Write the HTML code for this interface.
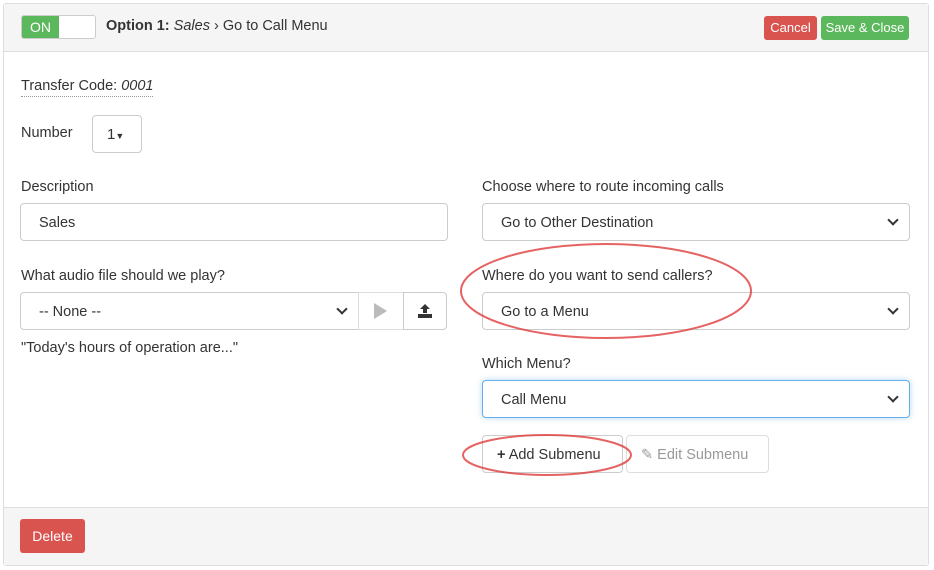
<!DOCTYPE html>
<html><head><style>
body{margin:0;width:934px;height:570px;background:#fff;font-family:"Liberation Sans",sans-serif;color:#333;position:relative;overflow:hidden}
.a{position:absolute}
.panel{left:3px;top:3px;width:924px;height:561px;border:1px solid #ddd;border-radius:3px}
.hd{left:4px;top:4px;width:924px;height:47px;background:#f5f5f5;border-bottom:1px solid #ddd}
.ft{left:4px;top:507px;width:924px;height:57px;background:#f5f5f5;border-top:1px solid #ddd}
.lbl{font-size:14.5px;color:#333}
.inp{border:1px solid #ccc;border-radius:4px;box-sizing:border-box;font-size:14.5px;padding-left:18px;padding-top:3px;background:#fff}
.chev{position:absolute;right:12px;top:12px;width:6px;height:6px;border-right:2px solid #333;border-bottom:2px solid #333;transform:rotate(45deg)}
.btn{border-radius:3px;color:#fff;font-size:13px;text-align:center;box-sizing:border-box}
</style></head><body>
<div class="a panel"></div>
<div class="a hd"></div>
<div class="a ft"></div>
<div class="a" style="left:21px;top:15px;width:75px;height:24px;border:1px solid #ccc;border-radius:3px;background:#fff;box-sizing:border-box"></div>
<div class="a" style="left:22px;top:16px;width:37px;height:22px;background:#5cb85c;color:#fff;font-size:14px;line-height:22px;text-align:center;border-radius:2px 0 0 2px">ON</div>
<div class="a" style="left:106px;top:18px;font-size:14.5px"><b>Option 1:</b> <i>Sales</i> › Go to Call Menu</div>
<div class="a btn" style="left:764px;top:16px;width:53px;height:24px;background:#d9534f;line-height:24px">Cancel</div>
<div class="a btn" style="left:821px;top:16px;width:88px;height:24px;background:#5cb85c;line-height:24px">Save &amp; Close</div>
<div class="a lbl" style="left:21px;top:78px;border-bottom:1px dotted #999;padding-bottom:2px">Transfer Code: <i>0001</i></div>
<div class="a lbl" style="left:21px;top:125px">Number</div>
<div class="a" style="left:92px;top:115px;width:50px;height:38px;border:1px solid #ccc;border-radius:4px;box-sizing:border-box;font-size:15px;line-height:38px;padding-left:14px">1<span style="font-size:9px">▼</span></div>
<div class="a lbl" style="left:21px;top:179px">Description</div>
<div class="a inp" style="left:20px;top:203px;width:428px;height:38px;line-height:32px">Sales</div>
<div class="a lbl" style="left:21px;top:268px">What audio file should we play?</div>
<div class="a inp" style="left:20px;top:292px;width:339px;height:38px;line-height:32px;border-radius:4px 0 0 4px">-- None --<span class="chev"></span></div>
<div class="a" style="left:358px;top:292px;width:46px;height:38px;border:1px solid #ddd;box-sizing:border-box;background:#fff"><span class="a" style="left:15px;top:10px;border-left:13px solid #bbb;border-top:8px solid transparent;border-bottom:8px solid transparent"></span></div>
<div class="a" style="left:403px;top:292px;width:44px;height:38px;border:1px solid #ccc;border-radius:0 4px 4px 0;box-sizing:border-box;background:#fff">
<svg class="a" style="left:13px;top:10px" width="16" height="16" viewBox="0 0 16 16"><path d="M8 1 L3 6 H6 V10 H10 V6 H13 Z" fill="#333"/><rect x="1" y="11" width="14" height="4" fill="#333"/></svg></div>
<div class="a lbl" style="left:21px;top:340px">"Today's hours of operation are..."</div>
<div class="a lbl" style="left:482px;top:179px">Choose where to route incoming calls</div>
<div class="a inp" style="left:482px;top:203px;width:428px;height:38px;line-height:32px">Go to Other Destination<span class="chev"></span></div>
<div class="a lbl" style="left:482px;top:268px">Where do you want to send callers?</div>
<div class="a inp" style="left:482px;top:292px;width:428px;height:38px;line-height:32px">Go to a Menu<span class="chev"></span></div>
<div class="a lbl" style="left:482px;top:356px">Which Menu?</div>
<div class="a inp" style="left:482px;top:380px;width:428px;height:38px;line-height:32px;border-color:#66afe9;box-shadow:0 0 6px rgba(102,175,233,.5)">Call Menu<span class="chev"></span></div>
<div class="a" style="left:482px;top:435px;width:141px;height:38px;border:1px solid #ccc;border-radius:4px;box-sizing:border-box;font-size:14.5px;line-height:38px;padding-left:14px"><b>+</b> Add Submenu</div>
<div class="a" style="left:626px;top:435px;width:143px;height:38px;border:1px solid #ddd;border-radius:4px;box-sizing:border-box;font-size:14.5px;line-height:38px;padding-left:14px;color:#999">✎ Edit Submenu</div>
<div class="a btn" style="left:20px;top:519px;width:65px;height:34px;background:#d9534f;line-height:34px;font-size:14px">Delete</div>
<svg class="a" style="left:0;top:0" width="934" height="570">
<ellipse cx="606" cy="291" rx="145" ry="47" fill="none" stroke="#e03c3c" stroke-width="2" opacity=".8"/>
<ellipse cx="547" cy="455" rx="84" ry="20" fill="none" stroke="#e03c3c" stroke-width="2" opacity=".8"/>
</svg>
</body></html>
